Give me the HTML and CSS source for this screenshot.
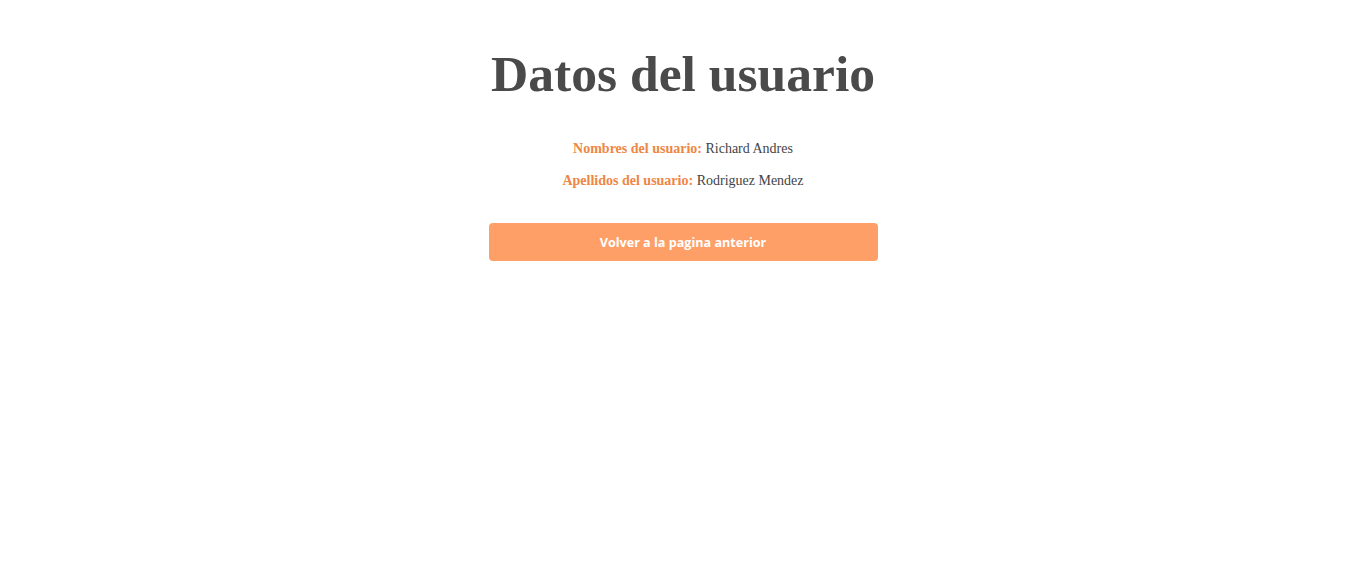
FILE: index.html
```html
<!DOCTYPE html>
<html lang="es">
<head>
<meta charset="utf-8">
<title>Datos del usuario</title>
<link rel="stylesheet" href="styles.css">
</head>
<body>
<main class="card">
  <h1 class="title">Datos del usuario</h1>
  <p class="row"><span class="label">Nombres del usuario:</span> Richard Andres</p>
  <p class="row"><span class="label">Apellidos del usuario:</span> Rodriguez Mendez</p>
  <button class="back" type="button">Volver a la pagina anterior</button>
</main>
</body>
</html>
```
FILE: styles.css
```css
html, body {
  margin: 0;
  padding: 0;
  background: #ffffff;
}
body {
  font-family: "Liberation Serif", "Times New Roman", serif;
  color: #444444;
}
.card {
  width: 389px;
  margin: 0 auto;
  padding-top: 44px;
  display: flex;
  flex-direction: column;
  align-items: center;
}
.title {
  margin: 0 0 36px;
  font-size: 51.6px;
  line-height: 60px;
  font-weight: bold;
  color: #4a4a4a;
  white-space: nowrap;
}
.row {
  margin: 0 0 14px;
  font-size: 14px;
  line-height: 18px;
  color: #444444;
  white-space: nowrap;
}
.label {
  font-weight: bold;
  color: #ef8644;
}
.back {
  margin-top: 19px;
  width: 389px;
  height: 38px;
  border: none;
  border-radius: 4px;
  background: #ff9f68;
  color: #ffffff;
  font-family: "Open Sans", "Noto Sans", sans-serif;
  font-weight: 700;
  font-size: 12.6px;
  cursor: pointer;
}
```
